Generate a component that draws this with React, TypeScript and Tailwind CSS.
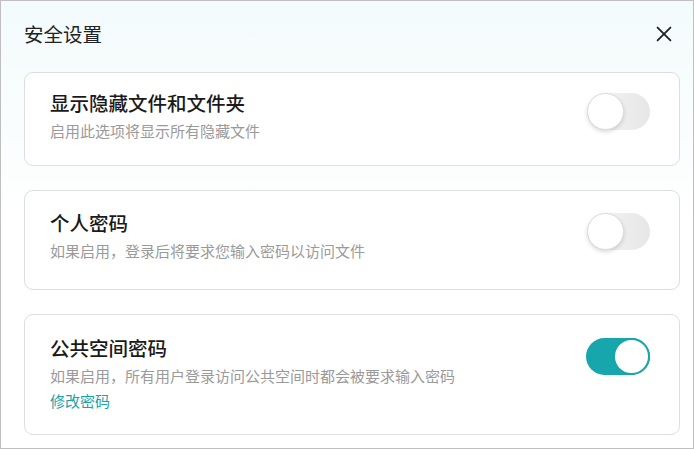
function Toggle({ on }: { on: boolean }) {
  if (on) {
    return (
      <div className="relative w-[64px] h-[37px] rounded-full bg-[#17a6ab] shrink-0">
        <div className="absolute right-0 top-0 w-[37px] h-[37px] rounded-full bg-white border-2 border-[#17a6ab]" />
      </div>
    );
  }
  return (
    <div className="relative w-[63px] h-[37px] rounded-full bg-gradient-to-r from-[#f7f7f7] to-[#e6e6e6] shrink-0">
      <div className="absolute left-0 top-0 w-[37px] h-[37px] rounded-full bg-white border border-[#dcdcdc] shadow-[0_2px_4px_rgba(0,0,0,0.15)]" />
    </div>
  );
}

function Card({
  title,
  desc,
  on,
  link,
  h,
  pt,
}: {
  title: string;
  desc: string;
  on: boolean;
  link?: string;
  h: string;
  pt: string;
}) {
  return (
    <div className={`flex justify-between border border-[#dedede] rounded-[9px] bg-white pl-[25px] pr-[29px] ${h} ${pt}`}>
      <div className="flex flex-col">
        <div className="text-[19.5px] leading-[26px] font-medium text-[#1a1a1a]">{title}</div>
        <div className="mt-[4px] text-[15px] leading-[22px] text-[#9a9a9a]">{desc}</div>
        {link && <div className="mt-[3px] text-[15px] leading-[22px] text-[#1aa2a8]">{link}</div>}
      </div>
      <div className="pt-[3px]">
        <Toggle on={on} />
      </div>
    </div>
  );
}

export default function App() {
  return (
    <div
      className="w-[694px] h-[449px] border border-[#bfbfbf] bg-gradient-to-b from-[#f3fbfc] via-white to-white flex flex-col"
      style={{ fontFamily: '"Noto Sans CJK SC", "Noto Sans", sans-serif' }}
    >
      <div className="flex items-center justify-between pl-[23px] pr-[18px] h-[68px] pb-[3px]">
        <h1 className="text-[19.5px] font-normal text-[#222]">安全设置</h1>
        <svg width="22" height="22" viewBox="0 0 24 24" fill="none" stroke="#222" strokeWidth="2" strokeLinecap="round">
          <path d="M5 5l14 14M19 5L5 19" />
        </svg>
      </div>
      <div className="flex flex-col gap-[24px] pl-[23px] pr-[13px] pt-[3px]">
        <Card title="显示隐藏文件和文件夹" desc="启用此选项将显示所有隐藏文件" on={false} h="h-[94px]" pt="pt-[17px]" />
        <Card title="个人密码" desc="如果启用，登录后将要求您输入密码以访问文件" on={false} h="h-[100px]" pt="pt-[19px]" />
        <Card
          title="公共空间密码"
          desc="如果启用，所有用户登录访问公共空间时都会被要求输入密码"
          on={true}
          link="修改密码"
          h="h-[121px]"
          pt="pt-[20px]"
        />
      </div>
    </div>
  );
}
